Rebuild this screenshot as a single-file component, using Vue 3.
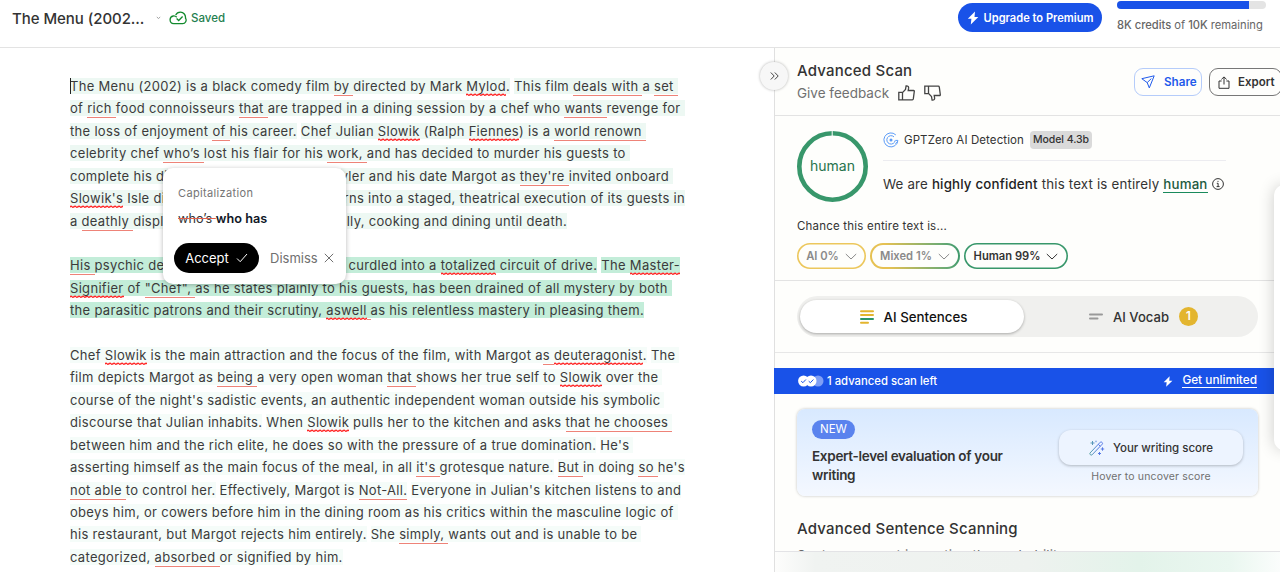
<template>
  <div class="app">
    <header class="topbar">
      <div class="doc">
        <span class="doc-title">The Menu (2002...</span>
        <svg class="doc-caret" width="5" height="4" viewBox="0 0 5 4"><path d="M.8 1l1.7 1.5L4.2 1" /></svg>
        <svg class="cloud" width="18" height="14" viewBox="0 0 18 14">
          <path d="M4.6 12.7h9a3.6 3.6 0 0 0 2.900-5.600c.3-3-1.800-6-5-6-2.200 0-4 1.100-4.800 3M4.600 12.700a3.900 3.900 0 0 1-.4-7.700c1.500-.2 2.700.3 3.600 1.300M7.600 7.500l2.100 2 3.900-4" />
        </svg>
        <span class="saved">Saved</span>
      </div>
      <button class="upgrade">
        <svg width="12" height="14" viewBox="0 0 12 14"><path d="M8 .6L.8 7.800h3.600L3.800 13.400 11.300 6H7.500z" /></svg>
        Upgrade to Premium
      </button>
      <div class="credits">
        <div class="track"><div class="fill"></div></div>
        <p>8K credits <span>of</span> 10K <span>remaining</span></p>
      </div>
    </header>

    <main class="body">
      <section class="editor">
        <div v-for="(para, p) in paragraphs" :key="p" class="para" :class="para.tone">
          <div v-for="(line, l) in para.lines" :key="l" class="line" :style="line.width ? { width: line.width + 'px' } : null">
            <div v-for="(chunk, c) in chunks(line)" :key="c"><span v-for="(part, i) in parse(chunk)" :key="i" :class="part.kind">{{ part.text }}</span></div>
          </div>
        </div>
        <i class="cursor"></i>

        <div class="popup">
          <div class="popup-label">Capitalization</div>
          <div class="popup-fix"><s>who’s </s><b>who has</b></div>
          <div class="popup-actions">
            <button class="accept">Accept
              <svg width="12" height="10" viewBox="0 0 12 10"><path d="M1 5.500l3.200 3.200L11 1" /></svg>
            </button>
            <button class="dismiss">Dismiss
              <svg width="10" height="10" viewBox="0 0 10 10"><path d="M.8.8l8.400 8.400M9.200.8L.8 9.200" /></svg>
            </button>
          </div>
        </div>
      </section>

      <aside class="panel">
        <div class="collapse">
          <svg width="9" height="8" viewBox="0 0 9 8"><path d="M.8.5L4.200 4 .8 7.500M4.800.5L8.200 4 4.800 7.500" /></svg>
        </div>

        <div class="scan-head">
          <div>
            <h2>Advanced Scan</h2>
            <div class="feedback">
              <span>Give feedback</span>
              <svg width="17" height="16" viewBox="0 0 17 16"><path d="M.8 7.400h3.700v7.400H.8zM4.500 7.600l3-3.200.6-3.600c1.900-.2 2.700 1 2.500 2.400l-.4 2.300h5.400c.5 0 .8.4.7.9l-1 7.500c-.1.600-.4.9-1 .9H4.500" /></svg>
              <svg width="17" height="16" viewBox="0 0 17 16"><path d="M.8 1.200h3.700v7.400H.8zM4.500 8.400l3 3.200.6 3.600c1.900.2 2.700-1 2.500-2.400l-.4-2.300h5.400c.5 0 .8-.4.7-.9l-1-7.500c-.1-.6-.4-.9-1-.9H4.500" /></svg>
            </div>
          </div>
          <button class="outline share">
            <svg width="14" height="14" viewBox="0 0 14 14"><path d="M.8 3.700L13.200.8 8.300 12.900 6.200 7.600zM6.200 7.600l4.200-4.100" /></svg>
            Share
          </button>
          <button class="outline export">
            <svg width="12" height="13" viewBox="0 0 12 13"><path d="M3.600 5H1v7.300h10V5H8.400M6 8.500V1M3.400 3.400L6 .9l2.600 2.500" /></svg>
            Export
          </button>
        </div>

        <div class="result">
          <div class="result-row">
            <div class="ring">
              <svg width="71" height="71" viewBox="0 0 71 71">
                <circle cx="35.500" cy="35.500" r="33.200" />
                <path d="M35.200 0v5" />
              </svg>
              <span>human</span>
            </div>
            <div class="verdict">
              <div class="model">
                <svg width="16" height="16" viewBox="0 0 16 16">
                  <path d="M12.800 2.900A7 7 0 1 0 14.900 8.400H12.500M11 4.900A4.200 4.200 0 1 0 12.200 8.400M12.400 11.600l2-1.600" />
                  <circle cx="8" cy="8" r="1.500" />
                </svg>
                <span>GPTZero AI Detection</span>
                <em>Model 4.3b</em>
              </div>
              <div class="sentence">
                <span>We are <b>highly confident</b> this text is entirely <u>human</u></span>
                <svg width="12" height="12" viewBox="0 0 12 12"><circle cx="6" cy="6" r="5.400" /><path d="M4.800 5.300h1.300v3.200M4.600 8.600h3M5.500 3.400h1" /></svg>
              </div>
            </div>
          </div>
          <div class="chance">Chance this entire text is...</div>
          <div class="pills">
            <span v-for="pill in pills" :key="pill.text" class="pill" :class="pill.kind">
              {{ pill.text }}
              <svg width="12" height="7" viewBox="0 0 12 7"><path d="M.8 1L6 6 11.200 1" /></svg>
            </span>
          </div>
        </div>

        <div class="tabs-wrap">
          <div class="tabs">
            <div class="tab active">
              <svg width="14" height="14" viewBox="0 0 14 14">
                <path d="M1 1.300h12M1 5h12" class="y" /><path d="M1 9h12" class="g" /><path d="M1 12.700h7" class="y" />
              </svg>
              AI Sentences
            </div>
            <div class="tab vocab">
              <svg width="14" height="7" viewBox="0 0 14 7"><path d="M1 1.400h12M1 5.400h7.500" class="n" /></svg>
              AI Vocab <span class="count">1</span>
            </div>
          </div>
        </div>

        <div class="banner">
          <svg width="26" height="12" viewBox="0 0 26 12">
            <circle cx="20" cy="6" r="5.500" class="dim" />
            <circle cx="13" cy="6" r="5.500" /><circle cx="5.600" cy="6" r="5.500" />
            <path d="M3.200 6.200l1.700 1.500 3-3.200M10.700 6.200l1.700 1.500 3-3.200" />
          </svg>
          <span>1 advanced scan left</span>
          <svg class="bolt" width="10" height="13" viewBox="0 0 12 14"><path d="M8 .6L.8 7.800h3.600L3.800 13.400 11.300 6H7.500z" /></svg>
          <a>Get unlimited</a>
        </div>

        <div class="promo">
          <div class="promo-text">
            <span class="new">NEW</span>
            <h3>Expert-level evaluation of your writing</h3>
          </div>
          <div class="score">
            <button>
              <svg width="16" height="16" viewBox="0 0 16 16">
                <defs>
                  <linearGradient id="wand" gradientUnits="userSpaceOnUse" x1="0" y1="8" x2="16" y2="8">
                    <stop offset="0" stop-color="#5aa79f" /><stop offset=".6" stop-color="#5578e6" />
                  </linearGradient>
                </defs>
                <path d="M1 13L11.300 2.200c1-1 3 .9 2 1.900L3 14.900c-1 .9-2.900-.9-2-1.900zM9.300 4.300l2 2M3.500 1v4M1.500 3h4M13.500 7.300v3.400M11.800 9h3.400M10.500 12v3M9 13.500h3M7 .7v1.500" stroke="url(#wand)" />
              </svg>
              Your writing score
            </button>
            <p>Hover to uncover score</p>
          </div>
        </div>

        <h2 class="scanning">Advanced Sentence Scanning</h2>
        <p class="impact">Sentences most impacting the probability</p>
        <div class="foot"></div>
      </aside>
      <div class="drawer"></div>
    </main>
  </div>
</template>

<script setup>
// _word_ is a grammar hint, ~word~ is a spelling error, | leaves a plain space between sentences,
// ^ is the stretch of a fixed-width line that the popup lies over
const paragraphs = [
  {
    tone: 'light',
    lines: [
      { text: 'The Menu (2002) is a black comedy film _by _directed by Mark ~Mylod~.|This film _deals with _a _set _' },
      { text: 'of _rich _food connoisseurs _that _are trapped in a dining session by a chef who _wants _revenge for ' },
      { text: 'the loss of enjoyment _of _his career.|Chef Julian ~Slowik~ (Ralph ~Fiennes~) is a _world renown _' },
      { text: 'celebrity chef _who’s _lost his flair for his _work, _and has decided to murder his guests to ' },
      { text: 'complete his di^yler and his date Margot as _they\'re _invited onboard ', width: 603 },
      { text: '~Slowik\'s~ Isle di^rns into a staged, theatrical execution of its guests in', width: 615 },
      { text: 'a _deathly _displ^lly, cooking and dining until death.', width: 497 }
    ]
  },
  {
    tone: 'strong',
    lines: [
      { text: '_His _psychic de^ curdled into a ~totalized~ circuit of drive.|The ~Master-~', width: 610 },
      { text: '~Signifier~ of _"Chef", _as he states plainly to his guests, has been drained of all mystery by both ' },
      { text: 'the parasitic patrons and their scrutiny, ~aswell~_ _as his relentless mastery in pleasing them.' }
    ]
  },
  {
    tone: 'faint',
    lines: [
      { text: 'Chef ~Slowik~ is the main attraction and the focus of the film, with Margot a_s _~deuteragonist~.|The ' },
      { text: 'film depicts Margot as _being _a very open woman _that _shows her true self to ~Slowik~ over the ' },
      { text: 'course of the night\'s sadistic events, an authentic independent woman outside his symbolic ' },
      { text: 'discourse that Julian inhabits.|When ~Slowik~ pulls her to the kitchen and asks _that he chooses _' },
      { text: 'between him and the rich elite, he does so with the pressure of a true domination.|He\'s ' },
      { text: 'asserting himself as the main focus of the meal, in all _it\'s _grotesque nature.|_But _in doing _so _he\'s' },
      { text: '_not able _to control her.|Effectively, Margot is _Not-All._|Everyone in Julian\'s kitchen listens to and' },
      { text: 'obeys him, or cowers before him in the dining room as his critics within the masculine logic of ' },
      { text: 'his restaurant, but Margot rejects him entirely.|She _simply, _wants out and is unable to be ' },
      { text: 'categorized, _absorbed _or signified by him.' }
    ]
  }
]

const pills = [
  { text: 'AI 0%', kind: 'ai' },
  { text: 'Mixed 1%', kind: 'mixed' },
  { text: 'Human 99%', kind: 'human' }
]

function chunks(line) {
  return line.text.split('^')
}

function parse(text) {
  return text.split(/(_[^_]+_|~[^~]+~|\|)/).filter(Boolean).map((part) => {
    if (part === '|') return { kind: 'gap', text: ' ' }
    if (part[0] === '_') return { kind: 'hl hint', text: part.slice(1, -1) }
    if (part[0] === '~') return { kind: 'hl spell', text: part.slice(1, -1) }
    return { kind: 'hl', text: part }
  })
}
</script>

<style>
body {
  background: #fff;
}
</style>

<style scoped>
.app {
  width: 1280px;
  height: 572px;
  overflow: hidden;
  display: flex;
  flex-direction: column;
  font-family: Inter, "Liberation Sans", sans-serif;
  color: #333;
}

.app * {
  box-sizing: border-box;
}

h2, h3, p {
  margin: 0;
}

button {
  font-family: inherit;
  padding: 0;
  border: 0;
  background: none;
  white-space: nowrap;
}

svg {
  fill: none;
  stroke: currentColor;
  flex: none;
}

.topbar {
  height: 48px;
  flex: none;
  display: flex;
  align-items: flex-start;
  border-bottom: 1px solid #e3e3e3;
}

.doc {
  flex: 1;
  display: flex;
  align-items: center;
  height: 36px;
  padding-left: 12px;
}

.doc-title {
  width: 144px;
  font-size: 15px;
  font-weight: 500;
  letter-spacing: -0.050px;
  white-space: nowrap;
}

.doc-caret {
  color: #888;
  stroke-width: 0.8;
}

.cloud {
  margin-left: 8px;
  color: #128a2e;
  stroke-width: 1.3;
}

.saved {
  margin-left: 4px;
  font-size: 11.500px;
  font-weight: 500;
  color: #1f8050;
}

.upgrade {
  width: 144px;
  height: 29px;
  margin-top: 3px;
  border-radius: 15px;
  background: #1952e8;
  color: #fff;
  font-size: 11.100px;
  font-weight: 600;
  display: flex;
  align-items: center;
  justify-content: center;
  gap: 5px;
}

.upgrade path,
.bolt path {
  fill: #fff;
  stroke: none;
}

.credits {
  width: 163px;
  margin-left: 15px;
  font-size: 11.200px;
  color: #666;
  white-space: nowrap;
}

.track {
  width: 149px;
  height: 8px;
  margin-top: 1px;
  border-radius: 4px;
  background: #e4e4e4;
  overflow: hidden;
}

.fill {
  width: 132px;
  height: 8px;
  background: #1952e8;
}

.credits p {
  margin-top: 9px;
  line-height: 15px;
  font-weight: 500;
}

.credits span {
  font-weight: 400;
}

.body {
  flex: 1;
  min-height: 0;
  display: flex;
  position: relative;
}

.editor {
  width: 774px;
  padding: 27px 0 0 70px;
  position: relative;
}

.para {
  margin-bottom: 22.430px;
}

.line {
  display: flex;
  justify-content: space-between;
  height: 22.430px;
  line-height: 22.430px;
  font-size: 13px;
  letter-spacing: 0.310px;
  white-space: pre;
  color: #3b3b3b;
}

.light .hl {
  background-color: #edf8f3;
}

.strong .hl {
  background-color: #c3edd9;
}

.faint .hl {
  background-color: #f5fcf9;
}

.hl.hint {
  border-bottom: 1px solid #ee8378;
  padding-bottom: 1px;
  background-clip: content-box;
}

.hl.spell {
  padding-bottom: 2px;
  background-image: url("data:image/svg+xml,%3Csvg xmlns='http://www.w3.org/2000/svg' width='4' height='3'%3E%3Cpath d='M-1 3L1 1 3 2.500 5 .5' fill='none' stroke='%23f22' stroke-width='1.200'/%3E%3C/svg%3E"), none;
  background-repeat: repeat-x;
  background-position: 0 100%;
  background-clip: padding-box, content-box;
}

.cursor {
  position: absolute;
  left: 70px;
  top: 30px;
  width: 1px;
  height: 16px;
  background: #222;
}

.popup {
  position: absolute;
  left: 163px;
  top: 120px;
  width: 183px;
  height: 116px;
  padding: 17px 0 0 11px;
  border-radius: 10px;
  background: #fff;
  box-shadow: 0 1px 5px rgba(0, 0, 0, 0.28);
}

.popup-label {
  padding-left: 4px;
  font-size: 11px;
  line-height: 16px;
  letter-spacing: 0.350px;
  color: #757575;
}

.popup-fix {
  padding-left: 4px;
  margin-top: 10px;
  font-size: 12.700px;
  line-height: 16px;
  white-space: pre;
}

.popup-fix s {
  text-decoration-color: #e2604f;
}

.popup-fix b {
  font-weight: 600;
  color: #111827;
}

.popup-actions {
  display: flex;
  margin-top: 16px;
}

.accept,
.dismiss {
  display: flex;
  align-items: center;
  height: 30px;
  font-size: 13px;
}

.accept {
  width: 85px;
  justify-content: center;
  gap: 7px;
  border-radius: 15px;
  background: #000;
  color: #fff;
}

.dismiss {
  margin-left: 11px;
  gap: 6px;
  color: #707070;
}

.panel {
  width: 506px;
  position: relative;
  border-left: 1px solid #e0e0e0;
  background: #fefefc;
}

.collapse {
  position: absolute;
  left: -15px;
  top: 14px;
  width: 28px;
  height: 28px;
  border-radius: 50%;
  background: #f7f7f7;
  box-shadow: 0 0 3px rgba(0, 0, 0, 0.3);
  display: flex;
  align-items: center;
  justify-content: center;
  color: #444;
}

.scan-head {
  height: 68px;
  padding: 13px 0 0 22px;
  display: flex;
  border-bottom: 1px solid #e3e3e3;
}

.scan-head > div {
  width: 337px;
  flex: none;
}

.scan-head h2,
.scanning {
  font-size: 15px;
  line-height: 20px;
  font-weight: 500;
  letter-spacing: 0.200px;
}

.feedback {
  display: flex;
  align-items: center;
  gap: 9px;
  height: 24px;
  font-size: 13.500px;
  color: #707070;
}

.feedback svg {
  color: #444;
  stroke-width: 1.3;
}

.outline {
  height: 28px;
  margin-top: 7px;
  border-radius: 9px;
  border: 1px solid #b5ccfa;
  display: flex;
  align-items: center;
  font-size: 11.700px;
  font-weight: 600;
  flex: none;
}

.share {
  width: 68px;
  padding-left: 6px;
  gap: 9px;
  color: #1f5aeb;
}

.export {
  width: 73px;
  margin-left: 7px;
  padding-left: 8px;
  gap: 8px;
  border-color: #777;
  color: #333;
  font-size: 11.500px;
}

.result {
  height: 165px;
  padding: 15px 0 0 22px;
  border-bottom: 1px solid #e3e3e3;
}

.result-row {
  display: flex;
}

.ring {
  width: 71px;
  height: 71px;
  position: relative;
  display: flex;
  align-items: center;
  justify-content: center;
  font-size: 14px;
  color: #27734d;
}

.ring span {
  margin-bottom: 2px;
}

.ring svg {
  position: absolute;
  left: 0;
  top: 0;
}

.ring circle {
  stroke: #38976b;
  stroke-width: 4.600;
}

.ring path {
  stroke: #fff;
}

.verdict {
  margin-left: 15px;
}

.model {
  width: 343px;
  height: 30px;
  padding-bottom: 11px;
  border-bottom: 1px solid #ececf0;
  display: flex;
  align-items: center;
  font-size: 11.500px;
  letter-spacing: 0.100px;
}

.model svg {
  color: #5b9bf7;
}

.model circle {
  fill: currentColor;
  stroke: none;
}

.model span {
  width: 126px;
  margin-left: 5px;
  white-space: nowrap;
}

.model em {
  height: 18px;
  width: 62px;
  text-align: center;
  border-radius: 4px;
  background: #dadada;
  font-style: normal;
  font-weight: 500;
  font-size: 10.500px;
  line-height: 18px;
  letter-spacing: -0.050px;
}

.sentence {
  display: flex;
  align-items: center;
  gap: 4px;
  margin-top: 13px;
  font-size: 13.300px;
  line-height: 20px;
  letter-spacing: 0.180px;
  white-space: nowrap;
}

.sentence b,
.sentence u {
  font-weight: 500;
  color: #222;
}

.sentence u {
  text-decoration: none;
  border-bottom: 1px solid #1a8a5c;
  color: #1d5a40;
}

.chance {
  margin-top: 16px;
  font-size: 11.500px;
  line-height: 16px;
  letter-spacing: 0.200px;
}

.pills {
  display: flex;
  gap: 4px;
  margin-top: 9px;
}

.pill {
  height: 26px;
  border-radius: 13px;
  box-shadow: inset 0 0 0 1.600px #ecc75c;
  display: flex;
  align-items: center;
  justify-content: center;
  gap: 6px;
  font-size: 11.200px;
  font-weight: 600;
  color: #8a8a8a;
}

.pill.ai {
  width: 69px;
}

.pill.mixed {
  width: 90px;
  border: 2px solid transparent;
  box-shadow: none;
  background: linear-gradient(#fefefc, #fefefc) padding-box, linear-gradient(80deg, #e6c152 20%, #6cab74 80%, #38976b) border-box;
}

.pill.human {
  width: 104px;
  box-shadow: inset 0 0 0 1.600px #38976b;
  color: #333;
}

.tabs-wrap {
  height: 72px;
  padding: 15px 0 0 22px;
  border-bottom: 1px solid #e7e7e7;
}

.tabs {
  width: 461px;
  height: 41px;
  padding: 4px 3px;
  border-radius: 21px;
  background: #f0f0ee;
  display: flex;
}

.tab {
  flex: 1;
  display: flex;
  align-items: center;
  justify-content: center;
  gap: 10px;
  font-size: 13.300px;
  font-weight: 500;
  border-radius: 17px;
}

.tab.active {
  flex: none;
  width: 224px;
  padding-left: 3px;
  background: #fff;
  color: #111;
  box-shadow: 0 1px 3px rgba(0, 0, 0, 0.3);
}

.tab.vocab {
  padding-left: 8px;
  font-size: 13.100px;
}

.tab svg {
  stroke-width: 2;
  stroke-linecap: round;
}

.y {
  stroke: #e3b52f;
}

.g {
  stroke: #2c9567;
}

.n {
  stroke: #999;
}

.count {
  width: 19px;
  height: 19px;
  border-radius: 50%;
  background: #e3b52f;
  color: #fff;
  font-size: 11.500px;
  font-weight: 600;
  line-height: 19px;
  text-align: center;
}

.banner {
  width: 500px;
  height: 26px;
  margin: 15px 0 0 -1px;
  padding: 0 17px 0 24px;
  background: #1952e8;
  color: #fff;
  display: flex;
  align-items: center;
  font-size: 11.300px;
  font-weight: 500;
}

.banner span {
  flex: 1;
  margin-left: 3px;
}

.banner circle {
  fill: #fff;
  stroke: none;
}

.banner .dim {
  fill: #7f9ff5;
}

.banner path {
  stroke: #1952e8;
}

.banner .bolt path {
  stroke: none;
}

.banner a {
  margin-left: 9px;
  font-size: 11.800px;
  line-height: 13px;
  border-bottom: 1px solid #fff;
}

.promo {
  width: 461px;
  height: 87px;
  margin: 15px 0 0 22px;
  padding: 11px 14px 0 15px;
  border-radius: 8px;
  background: linear-gradient(#d8e9ff, #f4f8ff);
  box-shadow: 0 0 3px rgba(0, 0, 0, 0.25);
  display: flex;
}

.promo-text {
  width: 247px;
  padding-right: 40px;
}

.new {
  display: block;
  width: 43px;
  height: 19px;
  border-radius: 10px;
  background: #5a83ee;
  color: #fff;
  font-size: 11.500px;
  line-height: 19px;
  text-align: center;
}

.promo h3 {
  margin-top: 8px;
  font-size: 13.500px;
  line-height: 18.500px;
  font-weight: 600;
  letter-spacing: -0.300px;
}

.score {
  margin-top: 10px;
  text-align: center;
}

.score button {
  width: 184px;
  height: 35px;
  border-radius: 12px;
  background: #edf4ff;
  box-shadow: 0 1px 3px rgba(0, 0, 0, 0.25);
  display: flex;
  align-items: center;
  justify-content: center;
  gap: 8px;
  font-size: 11.500px;
  font-weight: 500;
  color: #333;
}

.score p {
  margin-top: 4px;
  font-size: 10.500px;
  line-height: 15px;
  letter-spacing: 0.150px;
  color: #707070;
}

.scanning {
  margin: 23px 0 0 22px;
}

.impact {
  margin: 8px 0 0 22px;
  font-size: 13.500px;
  line-height: 16px;
  letter-spacing: 0.100px;
  color: #666;
}

.foot {
  position: absolute;
  left: 0;
  bottom: 0;
  width: 506px;
  height: 21px;
  border-top: 1px solid #e3e3e6;
  background: linear-gradient(90deg, #fdfdfc, #f0f3f1 8%, #eef2ef 50%, #e3f3ea 72%, #eaf7f0 90%, #fbfdfc);
}

.drawer {
  position: absolute;
  left: 1274px;
  top: 137px;
  width: 20px;
  height: 265px;
  border-radius: 10px;
  background: #fff;
  box-shadow: 0 0 16px rgba(0, 0, 0, 0.2);
}
</style>
